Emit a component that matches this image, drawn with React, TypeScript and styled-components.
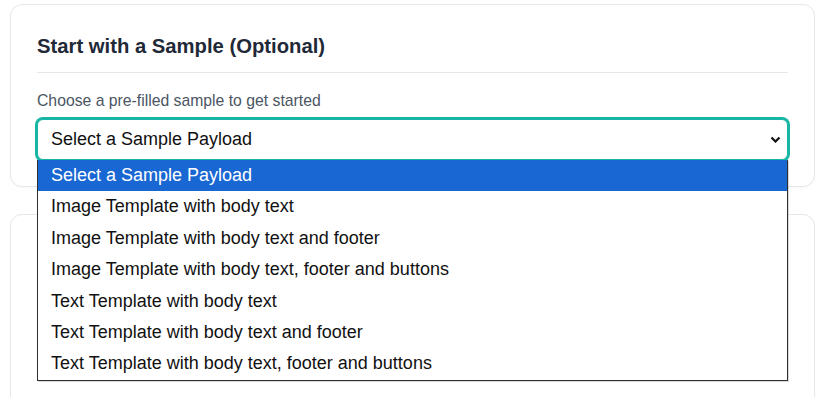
import React, { useState } from "react";
import styled, { createGlobalStyle } from "styled-components";

const GlobalStyle = createGlobalStyle`
  html, body {
    margin: 0;
    padding: 0;
    background: #ffffff;
    font-family: "Liberation Sans", Arial, sans-serif;
  }
`;

const samples = [
  "Select a Sample Payload",
  "Image Template with body text",
  "Image Template with body text and footer",
  "Image Template with body text, footer and buttons",
  "Text Template with body text",
  "Text Template with body text and footer",
  "Text Template with body text, footer and buttons",
];

const Page = styled.div`
  display: flex;
  flex-direction: column;
  gap: 27px;
  padding: 4px 10px 0;
`;

const Card = styled.section<{ $tall?: boolean }>`
  background: #ffffff;
  border: 1px solid #e5e7eb;
  border-radius: 12px;
  box-shadow: 0 1px 2px rgba(0, 0, 0, 0.03);
  min-height: ${({ $tall }) => ($tall ? "300px" : "auto")};
  padding: 26px 26px 26px;
`;

const CardTitle = styled.h2`
  border-bottom: 1px solid #e5e7eb;
  color: #1f2937;
  font-size: 20.25px;
  font-weight: 700;
  line-height: 30px;
  margin: 0 0 18px;
  padding-bottom: 11px;
`;

const FieldLabel = styled.label`
  color: #4b5563;
  display: block;
  font-size: 15.75px;
  line-height: 20px;
  margin-bottom: 8px;
`;

const SelectWrap = styled.div`
  position: relative;
`;

const SelectBox = styled.button`
  align-items: center;
  background: #ffffff;
  border: 1px solid #17b5a3;
  border-radius: 6px;
  box-shadow: 0 0 0 2px #17b5a3;
  box-sizing: border-box;
  color: #111111;
  display: flex;
  font-family: inherit;
  font-size: 18px;
  height: 41px;
  justify-content: space-between;
  padding: 0 6px 0 13px;
  text-align: left;
  width: 100%;
`;

const Chevron = styled.svg`
  display: block;
  height: 7px;
  width: 11px;
`;

const OptionList = styled.ul`
  background: #ffffff;
  border: 1px solid #2f2f2f;
  border-top: none;
  box-shadow: 1px 1px 0 rgba(0, 0, 0, 0.15);
  left: 0;
  list-style: none;
  margin: 0;
  padding: 0;
  position: absolute;
  right: 0;
  top: 100%;
  z-index: 10;
`;

const OptionItem = styled.li<{ $active: boolean }>`
  background: ${({ $active }) => ($active ? "#1967d2" : "#ffffff")};
  color: ${({ $active }) => ($active ? "#ffffff" : "#111111")};
  font-size: 18px;
  height: 31.4px;
  line-height: 31.4px;
  padding-left: 13px;
  white-space: nowrap;
`;

export default function App() {
  const [selected] = useState(0);

  return (
    <>
      <GlobalStyle />
      <Page>
        <Card>
          <CardTitle>Start with a Sample (Optional)</CardTitle>
          <FieldLabel>Choose a pre-filled sample to get started</FieldLabel>
          <SelectWrap>
            <SelectBox type="button">
              {samples[selected]}
              <Chevron viewBox="0 0 11 7">
                <polyline
                  points="1.5,1.5 5.5,5.5 9.5,1.5"
                  fill="none"
                  stroke="#111"
                  strokeWidth="2.2"
                />
              </Chevron>
            </SelectBox>
            <OptionList>
              {samples.map((s, i) => (
                <OptionItem key={s} $active={i === selected}>
                  {s}
                </OptionItem>
              ))}
            </OptionList>
          </SelectWrap>
        </Card>
        <Card $tall />
      </Page>
    </>
  );
}
